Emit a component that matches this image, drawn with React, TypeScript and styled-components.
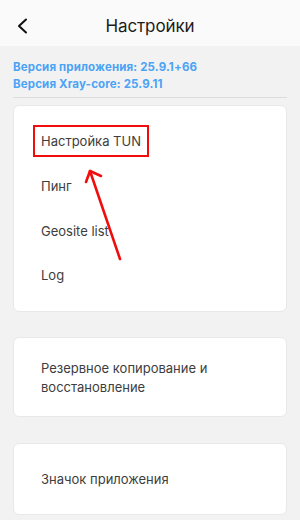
import React from 'react';
import styled, { createGlobalStyle } from 'styled-components';

const GlobalStyle = createGlobalStyle`
  html, body {
    margin: 0;
    padding: 0;
    background: #f2f2f2;
  }
  body {
    font-family: Inter, 'Noto Sans', sans-serif;
    -webkit-font-smoothing: antialiased;
  }
`;

const Page = styled.div`
  width: 300px;
  min-height: 520px;
  background: #f2f2f2;
  overflow: hidden;
`;

const Header = styled.div`
  box-sizing: border-box;
  height: 46px;
  padding-top: 5px;
  background: #fafafa;
  display: grid;
  grid-template-columns: 46px 1fr 46px;
  align-items: center;
`;

const BackButton = styled.button`
  background: transparent;
  border: none;
  padding: 0 0 0 16px;
  height: 41px;
  display: flex;
  align-items: center;
  color: #111;
  cursor: pointer;
`;

const Title = styled.h1`
  margin: 0;
  text-align: center;
  font-size: 17px;
  font-weight: 400;
  color: #1c1c1c;
  letter-spacing: -0.1px;
`;

const Versions = styled.div`
  padding: 13px 13px 0;
`;

const VersionLine = styled.div`
  font-size: 11.5px;
  line-height: 17px;
  font-weight: 700;
  letter-spacing: 0.15px;
  color: #4ba3f5;
`;

const Divider = styled.div`
  height: 1px;
  background: #dcdcdc;
  margin: 4px 13px 0;
`;

const Card = styled.div<{ $pad: string; $gap: number }>`
  position: relative;
  margin: ${p => p.$gap}px 13px 0;
  background: #fff;
  border: 1px solid #e8e8e8;
  border-radius: 6px;
  padding: ${p => p.$pad};
`;

const Item = styled.div`
  height: 44.7px;
  display: flex;
  align-items: center;
  font-size: 13px;
  color: #3d3d3d;
`;

const TextBlock = styled.div`
  font-size: 13px;
  line-height: 19px;
  color: #3d3d3d;
`;

const Highlight = styled.span`
  display: inline-block;
  border: 2px solid #f20d0d;
  padding: 6px 6px;
  margin-left: -8px;
`;

const Arrow = styled.svg`
  position: absolute;
  left: 0;
  top: 0;
  pointer-events: none;
`;

export default function App() {
  return (
    <Page>
      <GlobalStyle />
      <Header>
        <BackButton aria-label='back'>
          <svg width='12' height='16' viewBox='0 0 12 16'>
            <polyline
              points='10,1.5 3,8 10,14.5'
              fill='none'
              stroke='#111'
              strokeWidth='2'
              strokeLinecap='round'
              strokeLinejoin='round'
            />
          </svg>
        </BackButton>
        <Title>Настройки</Title>
        <div />
      </Header>

      <Versions>
        <VersionLine>Версия приложения: 25.9.1+66</VersionLine>
        <VersionLine>Версия Xray-core: 25.9.11</VersionLine>
      </Versions>
      <Divider />

      <Card $pad='13px 27px 13px' $gap={7}>
        <Item>
          <Highlight>Настройка TUN</Highlight>
        </Item>
        <Item>Пинг</Item>
        <Item>Geosite list</Item>
        <Item>Log</Item>
        <Arrow width='274' height='206' viewBox='0 0 274 206'>
          <g stroke='#f20d0d' strokeWidth='2.6' fill='none' strokeLinecap='round'>
            <line x1='106' y1='153' x2='76' y2='65' />
            <polyline points='72,76 76,65 87,70' strokeLinejoin='round' />
          </g>
        </Arrow>
      </Card>

      <Card $pad='21px 27px 19px' $gap={25}>
        <TextBlock>Резервное копирование и восстановление</TextBlock>
      </Card>

      <Card $pad='26px 27px 25px' $gap={26}>
        <TextBlock>Значок приложения</TextBlock>
      </Card>
    </Page>
  );
}
